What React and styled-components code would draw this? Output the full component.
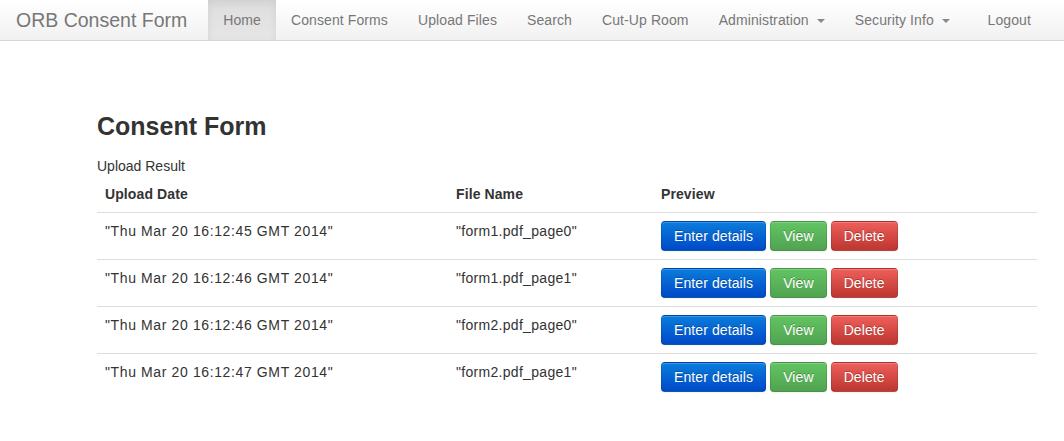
import React from "react";
import styled, { createGlobalStyle } from "styled-components";

const Global = createGlobalStyle`
  html, body { margin: 0; padding: 0; background: #fff; }
  body {
    font-family: "Liberation Sans", Arial, Helvetica, sans-serif;
    font-size: 14px;
    line-height: 20px;
    color: #333;
  }
  * { box-sizing: border-box; }
`;

const Navbar = styled.nav`
  display: flex;
  align-items: stretch;
  height: 41px;
  background: linear-gradient(to bottom, #ffffff 0%, #f1f1f1 100%);
  border-bottom: 1px solid #d6d6d6;
  padding-left: 16px;
`;

const Brand = styled.a`
  font-size: 19.5px;
  line-height: 40px;
  color: #777;
  text-decoration: none;
  margin-right: 21px;
`;

const NavList = styled.ul`
  display: flex;
  list-style: none;
  margin: 0;
  padding: 0;
  flex: 1;
`;

const NavItem = styled.li`
  display: flex;
  align-items: center;
  padding: 0 15px;
  height: 40px;
  color: #777;
  font-size: 14px;
  letter-spacing: 0.1px;
  background: ${(p) => (p.$active ? "linear-gradient(to bottom, #dedede 0%, #e6e6e6 100%)" : "transparent")};
  box-shadow: ${(p) => (p.$active ? "inset 0 3px 8px rgba(0,0,0,0.07)" : "none")};
  margin-left: ${(p) => (p.$push ? "auto" : "0")};
  margin-right: ${(p) => (p.$push ? "18px" : "0")};
`;

const Caret = styled.span`
  display: inline-block;
  width: 0;
  height: 0;
  margin-left: 8px;
  margin-top: 2px;
  border-top: 4px solid #888;
  border-left: 4px solid transparent;
  border-right: 4px solid transparent;
`;

const Main = styled.main`
  width: 940px;
  margin-left: 97px;
  padding-top: 71px;
`;

const Heading = styled.h2`
  margin: 0;
  font-size: 25px;
  line-height: 28px;
  font-weight: bold;
  color: #333;
`;

const Caption = styled.div`
  margin-top: 16px;
  font-size: 14px;
  line-height: 20px;
  color: #333;
`;

const Table = styled.div`
  display: grid;
  grid-template-columns: 351px 205px 1fr;
`;

const HeadCell = styled.div`
  padding: 8px;
  font-weight: bold;
  line-height: 20px;
  color: #333;
  letter-spacing: 0.1px;
`;

const Cell = styled.div`
  padding: 8px;
  line-height: 20px;
  border-top: 1px solid #dddddd;
  color: #333;
  height: 47px;
  letter-spacing: ${(p) => p.$spacing || "0"};
`;

const ButtonRow = styled.div`
  display: flex;
  gap: 4px;
`;

const variants = {
  primary: { top: "#0a7ddb", bottom: "#0049c9", border: "#0044aa" },
  success: { top: "#62c462", bottom: "#51a351", border: "#4a944a" },
  danger: { top: "#ee5f5b", bottom: "#bd362f", border: "#ad322c" },
};

const Button = styled.button`
  font-family: "Liberation Sans", Arial, sans-serif;
  font-size: 14px;
  line-height: 20px;
  height: 30px;
  padding: 4px 12px;
  color: #fff;
  letter-spacing: 0.1px;
  border-radius: 4px;
  cursor: pointer;
  text-shadow: 0 -1px 0 rgba(0, 0, 0, 0.25);
  background: linear-gradient(
    to bottom,
    ${(p) => variants[p.$variant].top},
    ${(p) => variants[p.$variant].bottom}
  );
  border: 1px solid ${(p) => variants[p.$variant].border};
  border-color: rgba(0, 0, 0, 0.1) rgba(0, 0, 0, 0.1) rgba(0, 0, 0, 0.25);
  box-shadow: inset 0 1px 0 rgba(255, 255, 255, 0.2), 0 1px 2px rgba(0, 0, 0, 0.05);
`;

const rows = [
  ["Thu Mar 20 16:12:45 GMT 2014", "form1.pdf_page0"],
  ["Thu Mar 20 16:12:46 GMT 2014", "form1.pdf_page1"],
  ["Thu Mar 20 16:12:46 GMT 2014", "form2.pdf_page0"],
  ["Thu Mar 20 16:12:47 GMT 2014", "form2.pdf_page1"],
];

export default function App() {
  return (
    <>
      <Global />
      <Navbar>
        <Brand href="#">ORB Consent Form</Brand>
        <NavList>
          <NavItem $active>Home</NavItem>
          <NavItem>Consent Forms</NavItem>
          <NavItem>Upload Files</NavItem>
          <NavItem>Search</NavItem>
          <NavItem>Cut-Up Room</NavItem>
          <NavItem>
            Administration <Caret />
          </NavItem>
          <NavItem>
            Security Info <Caret />
          </NavItem>
          <NavItem $push>Logout</NavItem>
        </NavList>
      </Navbar>
      <Main>
        <Heading>Consent Form</Heading>
        <Caption>Upload Result</Caption>
        <Table>
          <HeadCell>Upload Date</HeadCell>
          <HeadCell>File Name</HeadCell>
          <HeadCell>Preview</HeadCell>
          {rows.map(([date, file], i) => (
            <React.Fragment key={i}>
              <Cell $spacing="0.62px">"{date}"</Cell>
              <Cell $spacing="0.3px">"{file}"</Cell>
              <Cell>
                <ButtonRow>
                  <Button $variant="primary">Enter details</Button>
                  <Button $variant="success">View</Button>
                  <Button $variant="danger">Delete</Button>
                </ButtonRow>
              </Cell>
            </React.Fragment>
          ))}
        </Table>
      </Main>
    </>
  );
}
